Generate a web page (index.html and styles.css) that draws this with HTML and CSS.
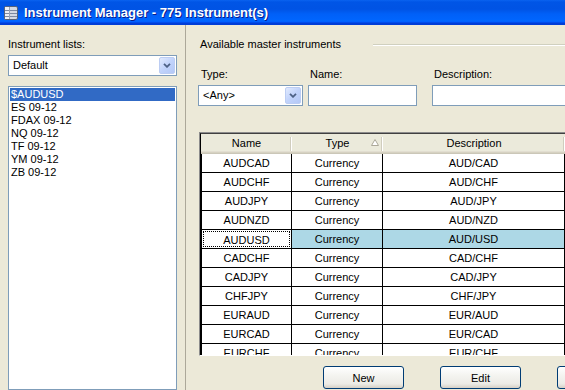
FILE: index.html
```html
<!DOCTYPE html>
<html lang="en">

<head>
    <meta charset="UTF-8">
    <title>Instrument Manager</title>
    <link rel="stylesheet" href="styles.css">
</head>

<body>
    <div class="window">
        <div class="titlebar">
            <svg class="app_icon" width="14" height="14" viewBox="0 0 14 14">
                <rect x="0.5" y="0.5" width="13" height="13" rx="1.5" fill="#D5DAE4" stroke="#56627A"/>
                <rect x="1" y="1" width="4" height="12" fill="#EEF1F6"/>
                <rect x="1" y="4" width="12" height="1" fill="#7E8AA2"/>
                <rect x="1" y="7" width="12" height="1" fill="#7E8AA2"/>
                <rect x="1" y="10" width="12" height="1" fill="#7E8AA2"/>
                <rect x="5" y="1" width="1" height="12" fill="#9AA4B8"/>
            </svg>
            <span>Instrument Manager - 775 Instrument(s)</span>
        </div>
        <div class="main">
            <div class="left">
                <div class="label">Instrument lists:</div>
                <div class="combo">
                    <span class="combo_text">Default</span>
                    <span class="drop_btn">
                        <svg width="8" height="5" viewBox="0 0 8 5"><path d="M1 0.8 L4 3.8 L7 0.8" fill="none" stroke="#4D6185" stroke-width="1.8"/></svg>
                    </span>
                </div>
                <ul class="listbox">
                    <li class="selected">$AUDUSD</li>
                    <li>ES 09-12</li>
                    <li>FDAX 09-12</li>
                    <li>NQ 09-12</li>
                    <li>TF 09-12</li>
                    <li>YM 09-12</li>
                    <li>ZB 09-12</li>
                </ul>
            </div>
            <div class="right">
                <div class="group_head">
                    <span>Available master instruments</span>
                    <span class="etched"></span>
                </div>
                <div class="filters">
                    <div class="field field_type">
                        <div class="label">Type:</div>
                        <div class="combo">
                            <span class="combo_text">&lt;Any&gt;</span>
                            <span class="drop_btn">
                                <svg width="8" height="5" viewBox="0 0 8 5"><path d="M1 0.8 L4 3.8 L7 0.8" fill="none" stroke="#4D6185" stroke-width="1.8"/></svg>
                            </span>
                        </div>
                    </div>
                    <div class="field field_name">
                        <div class="label">Name:</div>
                        <div class="textbox"></div>
                    </div>
                    <div class="field field_desc">
                        <div class="label">Description:</div>
                        <div class="textbox"></div>
                    </div>
                </div>
                <div class="grid">
                    <div class="grid_inner">
                        <div class="grid_head">
                            <div class="hcell c_name">Name</div>
                            <div class="hcell c_type">Type
                                <svg class="sort_arrow" width="8" height="7" viewBox="0 0 8 7"><path d="M4 0.5 L7.5 6.5 L0.5 6.5 Z" fill="#fff" stroke="#ACA899"/></svg>
                            </div>
                            <div class="hcell c_desc">Description</div>
                            <div class="hcell c_rest"></div>
                        </div>
                        <div class="row"><div class="cell c_name">AUDCAD</div><div class="cell c_type">Currency</div><div class="cell c_desc">AUD/CAD</div></div>
                        <div class="row"><div class="cell c_name">AUDCHF</div><div class="cell c_type">Currency</div><div class="cell c_desc">AUD/CHF</div></div>
                        <div class="row"><div class="cell c_name">AUDJPY</div><div class="cell c_type">Currency</div><div class="cell c_desc">AUD/JPY</div></div>
                        <div class="row"><div class="cell c_name">AUDNZD</div><div class="cell c_type">Currency</div><div class="cell c_desc">AUD/NZD</div></div>
                        <div class="row current"><div class="cell c_name"><span class="focus">AUDUSD</span></div><div class="cell c_type">Currency</div><div class="cell c_desc">AUD/USD</div></div>
                        <div class="row"><div class="cell c_name">CADCHF</div><div class="cell c_type">Currency</div><div class="cell c_desc">CAD/CHF</div></div>
                        <div class="row"><div class="cell c_name">CADJPY</div><div class="cell c_type">Currency</div><div class="cell c_desc">CAD/JPY</div></div>
                        <div class="row"><div class="cell c_name">CHFJPY</div><div class="cell c_type">Currency</div><div class="cell c_desc">CHF/JPY</div></div>
                        <div class="row"><div class="cell c_name">EURAUD</div><div class="cell c_type">Currency</div><div class="cell c_desc">EUR/AUD</div></div>
                        <div class="row"><div class="cell c_name">EURCAD</div><div class="cell c_type">Currency</div><div class="cell c_desc">EUR/CAD</div></div>
                        <div class="row"><div class="cell c_name">EURCHF</div><div class="cell c_type">Currency</div><div class="cell c_desc">EUR/CHF</div></div>
                    </div>
                </div>
                <div class="buttons">
                    <button class="btn">New</button>
                    <button class="btn">Edit</button>
                    <button class="btn">Delete</button>
                </div>
            </div>
        </div>
    </div>
</body>

</html>
```

FILE: styles.css
```css
html,
body {
    margin: 0;
    padding: 0;
    overflow: hidden;
    background: #ECE9D8;
    font: 11px "Liberation Sans", Arial, sans-serif;
    color: #000;
}

ul {
    margin: 0;
    padding: 0;
    list-style: none;
}

.window {
    width: 565px;
    height: 390px;
    overflow: hidden;
    display: flex;
    flex-direction: column;
}

/* title bar */
.titlebar {
    height: 25px;
    flex: none;
    display: flex;
    align-items: center;
    gap: 6px;
    padding-left: 4px;
    background: linear-gradient(to bottom, #0A63F0 0, #0055E6 2px, #0053E4 9px, #0060F8 14px, #0066FF 21px, #005BFF 22px, #003DD7 23px, #003DD7 25px);
    color: #fff;
    font: bold 13px "Liberation Sans", Arial, sans-serif;
    text-shadow: 1px 1px #0A1C8C;
    white-space: nowrap;
}

.main {
    flex: 1;
    display: flex;
    min-height: 0;
}

.label {
    height: 13px;
    line-height: 13px;
    margin-bottom: 4px;
    white-space: nowrap;
}

/* left side */
.left {
    width: 186px;
    flex: none;
    box-sizing: border-box;
    padding: 13px 8px 0 8px;
    border-right: 1px solid #ACA899;
    display: flex;
    flex-direction: column;
}

.combo {
    height: 21px;
    box-sizing: border-box;
    border: 1px solid #7F9DB9;
    background: #fff;
    display: flex;
    align-items: center;
    padding: 1px;
}

.combo_text {
    flex: 1;
    padding-left: 3px;
    line-height: 17px;
}

.drop_btn {
    width: 16px;
    height: 17px;
    box-sizing: border-box;
    border: 1px solid #BCCDF3;
    border-radius: 2px;
    background: linear-gradient(135deg, #E1EAFE, #C1D3FB 50%, #B4C8F6);
    display: flex;
    align-items: center;
    justify-content: center;
}

.listbox {
    margin-top: 10px;
    flex: 1;
    border: 1px solid #7F9DB9;
    background: #fff;
    padding: 1px;
}

.listbox li {
    height: 13px;
    line-height: 13px;
    padding-left: 1px;
    white-space: nowrap;
}

.listbox li.selected {
    background: #316AC5;
    color: #fff;
}

/* right side */
.right {
    flex: 1;
    min-width: 0;
    overflow: hidden;
    padding: 13px 0 0 12px;
}

.group_head {
    display: flex;
    align-items: center;
    height: 13px;
    line-height: 13px;
    padding-left: 2px;
    white-space: nowrap;
}

.etched {
    flex: 1;
    margin: 1px 0 0 32px;
    border-top: 1px solid #D0D0BF;
    border-bottom: 1px solid #fff;
}

.filters {
    display: flex;
    margin-top: 17px;
}

.field {
    flex: none;
}

.field .label {
    padding-left: 2px;
}

.field_type {
    width: 105px;
    margin-right: 5px;
}

.field_type .label {
    padding-left: 3px;
}

.field_name {
    width: 109px;
    margin-right: 15px;
}

.field_desc {
    width: 200px;
}

.textbox {
    height: 21px;
    box-sizing: border-box;
    border: 1px solid #7F9DB9;
    background: #fff;
}

/* grid */
.grid {
    width: 420px;
    height: 224px;
    box-sizing: border-box;
    margin: 26px 0 0 1px;
    border: 1px solid;
    border-color: #8C8C8C #fff #fff #8C8C8C;
    overflow: hidden;
}

.grid_inner {
    height: 100%;
    box-sizing: border-box;
    border-top: 1px solid #404040;
    border-left: 1px solid #000;
    background: #ECE9D8;
    overflow: hidden;
}

.grid_head {
    display: flex;
    height: 20px;
    background: #EBEADB;
    box-shadow: inset 0 -1px #CBC7B8, inset 0 -2px #D6D2C2, inset 0 -3px #E2DED1;
}

.hcell {
    position: relative;
    flex: none;
    box-sizing: border-box;
    text-align: center;
    line-height: 18px;
}

.hcell::after {
    content: "";
    position: absolute;
    right: 1px;
    top: 3px;
    bottom: 3px;
    width: 1px;
    background: #D0CDBE;
    box-shadow: 1px 0 #fff;
}

.hcell.c_rest::after {
    display: none;
}

.sort_arrow {
    position: absolute;
    right: 4px;
    top: 5px;
}

.c_name {
    width: 91px;
}

.c_type {
    width: 91px;
}

.c_desc {
    width: 182px;
}

.c_rest {
    flex: 1;
}

.row {
    display: flex;
}

.cell {
    flex: none;
    box-sizing: border-box;
    height: 19px;
    line-height: 18px;
    text-align: center;
    white-space: nowrap;
    background: #fff;
    border-right: 1px solid #000;
    border-bottom: 1px solid #000;
}

.cell.c_name {
    border-left: 1px solid #000;
}

.row.current .c_type,
.row.current .c_desc {
    background: #ADD8E6;
}

.row.current .c_name {
    padding: 1px;
}

.focus {
    display: block;
    height: 16px;
    line-height: 16px;
    border: 1px dotted #000;
    box-sizing: border-box;
}

/* buttons */
.buttons {
    display: flex;
    gap: 36px;
    margin: 10px 0 0 125px;
}

.btn {
    flex: none;
    width: 81px;
    height: 23px;
    padding: 0;
    border: 1px solid #003C74;
    border-radius: 3px;
    background: linear-gradient(to bottom, #fff 0, #F4F4F0 40%, #ECEBE6 80%, #D6D0C5 100%);
    font: 11px "Liberation Sans", Arial, sans-serif;
    color: #000;
}
```
